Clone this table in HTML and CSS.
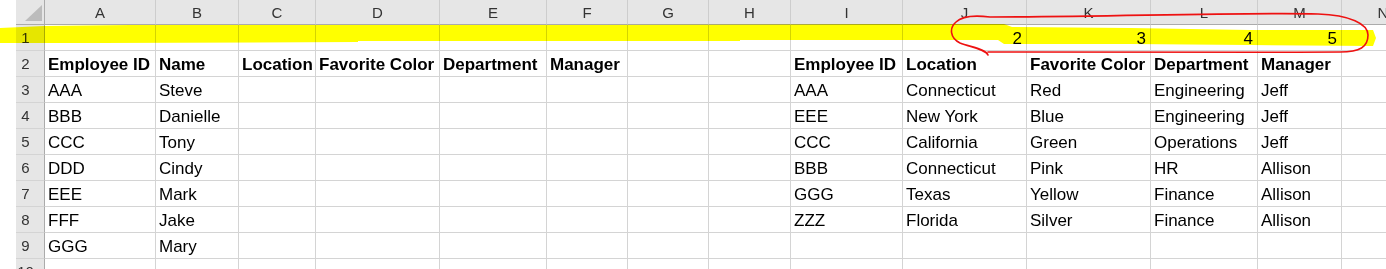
FILE: index.html
```html
<!DOCTYPE html>
<html lang="en">
<head>
  <meta charset="UTF-8">
  <title>Book1 - Sheet1</title>
  <link rel="stylesheet" href="styles.css">
</head>
<body>
  <div class="sheet" id="sheet"></div>

  <!-- highlighter stroke over row 1 and the pen loop round J1:M1 -->
  <svg class="ink" width="1386" height="269" viewBox="0 0 1386 269">
    <polygon class="marker" points="0,28 44,26 130,25 600,25 900,24 1004,24 1012,27 1130,28 1250,30 1373,30 1376,38 1373,46 1250,45 1130,44 1004,44 998,40 740,40 740,41 358,41 358,42 100,43 0,43"/>
    <path class="pen" d="M988 55 C986 49, 970 47, 960 43 C950 38, 949 28, 956 22 C962 16, 974 15, 990 17 C1100 17, 1250 12, 1318 14 C1350 15, 1368 24, 1368 35 C1368 47, 1360 52, 1340 52 C1200 53, 1050 52, 988 52"/>
  </svg>

  <script>
    const cols = 'ABCDEFGHIJKLMN'.split('');
    const heads = ['Employee ID', 'Name', 'Location', 'Favorite Color', 'Department', 'Manager'];
    const people = [
      ['AAA', 'Steve'], ['BBB', 'Danielle'], ['CCC', 'Tony'], ['DDD', 'Cindy'],
      ['EEE', 'Mark'], ['FFF', 'Jake'], ['GGG', 'Mary']
    ];
    const lookup = [
      ['AAA', 'Connecticut', 'Red', 'Engineering', 'Jeff'],
      ['EEE', 'New York', 'Blue', 'Engineering', 'Jeff'],
      ['CCC', 'California', 'Green', 'Operations', 'Jeff'],
      ['BBB', 'Connecticut', 'Pink', 'HR', 'Allison'],
      ['GGG', 'Texas', 'Yellow', 'Finance', 'Allison'],
      ['ZZZ', 'Florida', 'Silver', 'Finance', 'Allison']
    ];
    const sheet = document.getElementById('sheet');

    function cell(cls, text) {
      const d = document.createElement('div');
      d.className = cls;
      d.textContent = text;
      sheet.appendChild(d);
    }

    // grid contents, row by row; i is the column index (A = 0)
    function value(row, i) {
      if (row === 1) return i >= 9 && i <= 12 ? String(i - 7) : '';
      if (row === 2) {
        if (i < 6) return heads[i];
        if (i >= 8 && i <= 12) return ['Employee ID', 'Location', 'Favorite Color', 'Department', 'Manager'][i - 8];
        return '';
      }
      const p = people[row - 3];
      if (p && i < 2) return p[i];
      const l = lookup[row - 3];
      if (l && i >= 8 && i <= 12) return l[i - 8];
      return '';
    }

    cell('corner', '');
    cols.forEach(c => cell('col-head', c));

    for (let row = 1; row <= 10; row++) {
      cell('row-head', row);
      cols.forEach((c, i) => {
        let cls = 'cell';
        if (row === 1) cls += ' num';
        if (row === 2) cls += ' bold';
        cell(cls, value(row, i));
      });
    }
  </script>
</body>
</html>
```

FILE: styles.css
```css
body {
  margin: 0;
  padding-left: 16px;
  width: 1386px;
  height: 269px;
  box-sizing: border-box;
  overflow: hidden;
  position: relative;
  background-color: #fff;
  font-family: "Liberation Sans", Arial, sans-serif;
  color: #000;
}
.sheet {
  display: grid;
  grid-template-columns: 29px 111px 83px 77px 124px 107px 81px 81px 82px 112px 124px 124px 107px 84px 83px;
  grid-template-rows: 25px;
  grid-auto-rows: 26px;
}
.sheet > div {
  box-sizing: border-box;
  white-space: nowrap;
}
.corner, .col-head, .row-head {
  background-color: #e6e6e6;
  color: #333;
  font-size: 15px;
}
.corner {
  position: relative;
  border-right: 1px solid #ababab;
  border-bottom: 1px solid #ababab;
}
.corner::after {
  content: '';
  position: absolute;
  right: 2px;
  bottom: 3px;
  width: 17px;
  height: 16px;
  background-color: #bcbcbc;
  clip-path: polygon(100% 0, 100% 100%, 0 100%);
}
.col-head {
  text-align: center;
  line-height: 24px;
  padding-top: 1px;
  border-right: 1px solid #cdcdcd;
  border-bottom: 1px solid #ababab;
}
.row-head {
  text-align: center;
  line-height: 24px;
  padding: 1px 9px 0 0;
  border-right: 1px solid #ababab;
  border-bottom: 1px solid #d4d4d4;
}
.cell {
  font-size: 17px;
  line-height: 24px;
  padding: 2px 3px 0;
  border-right: 1px solid #d4d4d4;
  border-bottom: 1px solid #d4d4d4;
}
.cell.bold {
  font-weight: bold;
}
.cell.num {
  text-align: right;
  padding-right: 4px;
}
.ink {
  position: absolute;
  top: 0;
  left: 0;
  pointer-events: none;
}
.marker {
  fill: #ffff00;
  mix-blend-mode: multiply;
}
.pen {
  fill: none;
  stroke: #ee1111;
  stroke-width: 1.6;
  stroke-linecap: round;
}
```
